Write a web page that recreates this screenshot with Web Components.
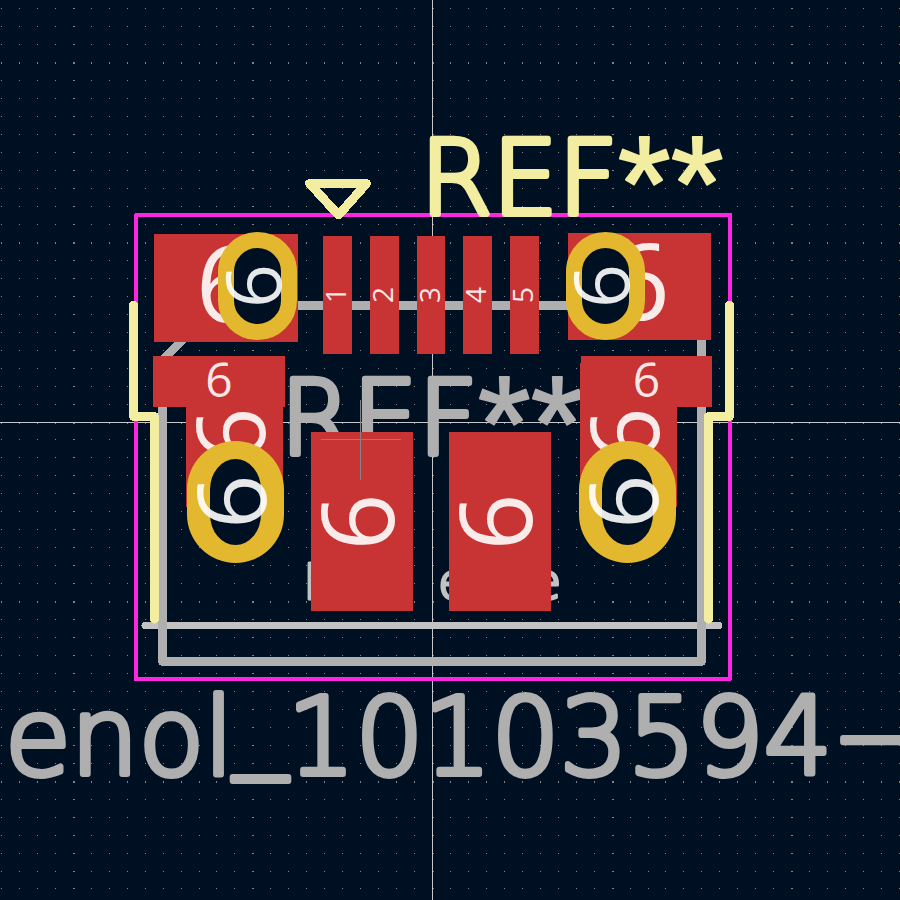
<!DOCTYPE html>
<html lang="en">
<head>
<meta charset="utf-8">
<title>Footprint viewer</title>
<style>
  body { margin: 0; background: #001023; }
</style>
</head>
<body>
<fp-board>
  <fp-grid></fp-grid>
  <fp-axes></fp-axes>

  <fp-lines color="#c2c2c2" weight="7" path="M145 625.5H719"></fp-lines>
  <fp-label x="303" y="599" size="50" weight="3" color="#c2c2c2">PCB</fp-label>
  <fp-label x="438" y="599" size="50" weight="3" color="#c2c2c2">edge</fp-label>

  <fp-lines color="#afafaf" weight="9" path="M162.5 661.5V360L217 305.5H701.5V661.5Z"></fp-lines>
  <fp-label x="280" y="454" size="104" weight="6" color="#afafaf">REF**</fp-label>
  <fp-label x="5" y="774" size="107" weight="6" color="#afafaf">enol_10103594−</fp-label>

  <fp-lines color="#ff26e2" weight="4" path="M136 215H730V679H136Z"></fp-lines>

  <fp-lines color="#f2eda1" weight="9" path="M133.5 305V416.5H154.5V619M729.5 305V416.5H708.5V619M309.5 183.5H366.5L338.5 215Z"></fp-lines>
  <fp-label x="420" y="214" size="104" weight="6" color="#f2eda1">REF**</fp-label>

  <fp-pad box="154 234 144 108" size="106">6</fp-pad>
  <fp-pad box="568 233 143 107" size="106">6</fp-pad>
  <fp-pad box="323 236 29 118" size="28" turned>1</fp-pad>
  <fp-pad box="370 236 29 118" size="28" turned>2</fp-pad>
  <fp-pad box="417 236 28 118" size="28" turned>3</fp-pad>
  <fp-pad box="463 236 29 118" size="28" turned>4</fp-pad>
  <fp-pad box="510 236 29 118" size="28" turned>5</fp-pad>
  <fp-pad box="186 363 97 144" size="95" turned>6</fp-pad>
  <fp-pad box="580 363 97 144" size="95" turned>6</fp-pad>
  <fp-pad box="153 356 132 51" size="48">6</fp-pad>
  <fp-pad box="581 356 131 51" size="48">6</fp-pad>
  <fp-pad box="311 432 102 179" size="100" turned>6</fp-pad>
  <fp-pad box="449 432 102 179" size="100" turned>6</fp-pad>
  <fp-pad box="218 232 79 108" size="77" ring="16px" turned>6</fp-pad>
  <fp-pad box="566 232 79 108" size="77" ring="16px" turned>6</fp-pad>
  <fp-pad box="187 441 97 122" size="95" ring="18px 23px" turned>6</fp-pad>
  <fp-pad box="579 441 97 122" size="95" ring="18px 23px" turned>6</fp-pad>

  <fp-lines color="#848484" weight="1" path="M360.5 400V480M321 439.5H401"></fp-lines>
</fp-board>

<script>
  // The board's drawing area: items use canvas coordinates around a centred origin.
  customElements.define('fp-board', class extends HTMLElement {
    constructor() {
      super();
      this.attachShadow({ mode: 'open' }).innerHTML = `
        <style>
          :host { display: block; position: relative; min-height: 100vh; overflow: hidden; background: #001023; }
          .origin { position: absolute; left: calc(50% - 450px); top: calc(50% - 450px); }
        </style>
        <div class="origin"><slot></slot></div>`;
    }
  });

  const SVG_STYLE = `
    :host { display: block; position: absolute; left: 0; top: 0; }
    svg { display: block; width: 1px; height: 1px; overflow: visible; }`;

  // Dotted grid; every tenth row and column is heavier.
  customElements.define('fp-grid', class extends HTMLElement {
    constructor() {
      super();
      const pitch = 17.96;
      let d = '';
      for (let i = -60; i <= 60; i++) {
        for (let j = -60; j <= 60; j++) {
          const x = Math.floor(432.5 + i * pitch), y = Math.floor(422 + j * pitch);
          const w = i % 10 ? 1 : 2, h = j % 10 ? 1 : 2;
          d += `M${x} ${y}h${w}v${h}h-${w}z`;
        }
      }
      this.attachShadow({ mode: 'open' }).innerHTML =
        `<style>${SVG_STYLE}</style><svg aria-hidden="true"><path fill="#848484" shape-rendering="crispEdges" d="${d}"/></svg>`;
    }
  });

  customElements.define('fp-axes', class extends HTMLElement {
    constructor() {
      super();
      this.attachShadow({ mode: 'open' }).innerHTML = `
        <style>${SVG_STYLE}</style>
        <svg aria-hidden="true"><path stroke="#c8c8cc" shape-rendering="crispEdges" d="M432.5 -2000V3000M-2000 422.5H3000"/></svg>`;
    }
  });

  // Board graphics drawn with a round pen.
  customElements.define('fp-lines', class extends HTMLElement {
    connectedCallback() {
      const weight = this.getAttribute('weight');
      const cap = weight === '1' ? 'butt' : 'round';
      this.attachShadow({ mode: 'open' }).innerHTML = `
        <style>${SVG_STYLE}</style>
        <svg aria-hidden="true"><path fill="none" stroke="${this.getAttribute('color')}" stroke-width="${weight}"
          stroke-linecap="${cap}" stroke-linejoin="round" shape-rendering="crispEdges" d="${this.getAttribute('path')}"/></svg>`;
    }
  });

  // Layer text with a rounded outline; asterisks use a five-armed face,
  // and underscores sit close to the baseline.
  customElements.define('fp-label', class extends HTMLElement {
    connectedCallback() {
      const a = n => this.getAttribute(n);
      const markup = this.textContent
        .replace(/\*+/, '<tspan class="star" dy="16">$&</tspan>')
        .replace(/_(.*)/, '<tspan dy="-18">_</tspan><tspan dy="18">$1</tspan>');
      this.attachShadow({ mode: 'open' }).innerHTML = `
        <style>
          ${SVG_STYLE}
          text { font: 200 ${a('size')}px "DejaVu Sans", sans-serif; font-kerning: none; fill: ${a('color')};
            stroke: ${a('color')}; stroke-width: ${a('weight')}px; stroke-linejoin: round; white-space: pre; }
          .star { font: 136px "Liberation Sans", sans-serif; stroke-width: 2px; }
        </style>
        <svg><text x="${a('x')}" y="${a('y')}">${markup}</text></svg>`;
    }
  });

  // A pad: solid copper, or a plated ring around an oval hole.
  customElements.define('fp-pad', class extends HTMLElement {
    connectedCallback() {
      const [x, y, w, h] = this.getAttribute('box').split(' ');
      const ring = this.getAttribute('ring');
      const look = ring
        ? `background: #001023; border: solid #e3b72e; border-width: ${ring}; border-radius: 50px;`
        : 'background: #c83434;';
      this.attachShadow({ mode: 'open' }).innerHTML = `
        <style>
          :host { position: absolute; left: ${x}px; top: ${y}px; width: ${w}px; height: ${h}px; box-sizing: border-box;
            display: flex; align-items: center; justify-content: center; ${look} }
          span { flex: none; font: ${this.getAttribute('size')}px "Open Sans", "Noto Sans", sans-serif; padding-bottom: .14em;
            color: rgba(255, 255, 255, .9); }
          :host([turned]) span { transform: rotate(-90deg); }
        </style>
        <span><slot></slot></span>`;
    }
  });
</script>
</body>
</html>
